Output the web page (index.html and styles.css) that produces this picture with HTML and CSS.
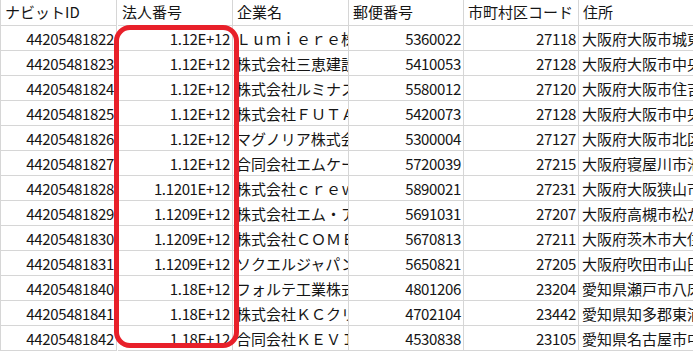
FILE: index.html
```html
<!DOCTYPE html>
<html lang="ja">
<head>
<meta charset="utf-8">
<title>Sheet</title>
<link rel="stylesheet" href="styles.css">
</head>
<body>
<div class="sheet">
  <div class="grid">
    <div class="c hd">ナビットID</div><div class="c hd">法人番号</div><div class="c hd">企業名</div><div class="c hd">郵便番号</div><div class="c hd">市町村区コード</div><div class="c hd">住所</div>

    <div class="c n">44205481822</div><div class="c n">1.12E+12</div><div class="c t">Ｌｕｍｉｅｒｅ株式会社</div><div class="c n">5360022</div><div class="c n">27118</div><div class="c t">大阪府大阪市城東区</div>
    <div class="c n">44205481823</div><div class="c n">1.12E+12</div><div class="c t">株式会社三恵建設</div><div class="c n">5410053</div><div class="c n">27128</div><div class="c t">大阪府大阪市中央区</div>
    <div class="c n">44205481824</div><div class="c n">1.12E+12</div><div class="c t">株式会社ルミナス</div><div class="c n">5580012</div><div class="c n">27120</div><div class="c t">大阪府大阪市住吉区</div>
    <div class="c n">44205481825</div><div class="c n">1.12E+12</div><div class="c t">株式会社ＦＵＴＡＢＡ</div><div class="c n">5420073</div><div class="c n">27128</div><div class="c t">大阪府大阪市中央区</div>
    <div class="c n">44205481826</div><div class="c n">1.12E+12</div><div class="c t">マグノリア株式会社</div><div class="c n">5300004</div><div class="c n">27127</div><div class="c t">大阪府大阪市北区</div>
    <div class="c n">44205481827</div><div class="c n">1.12E+12</div><div class="c t">合同会社エムケー</div><div class="c n">5720039</div><div class="c n">27215</div><div class="c t">大阪府寝屋川市池田</div>
    <div class="c n">44205481828</div><div class="c n">1.1201E+12</div><div class="c t">株式会社ｃｒｅｗ</div><div class="c n">5890021</div><div class="c n">27231</div><div class="c t">大阪府大阪狭山市</div>
    <div class="c n">44205481829</div><div class="c n">1.1209E+12</div><div class="c t">株式会社エム・ア</div><div class="c n">5691031</div><div class="c n">27207</div><div class="c t">大阪府高槻市松が丘</div>
    <div class="c n">44205481830</div><div class="c n">1.1209E+12</div><div class="c t">株式会社ＣＯＭＥ</div><div class="c n">5670813</div><div class="c n">27211</div><div class="c t">大阪府茨木市大住町</div>
    <div class="c n">44205481831</div><div class="c n">1.1209E+12</div><div class="c t">ソクエルジャパン</div><div class="c n">5650821</div><div class="c n">27205</div><div class="c t">大阪府吹田市山田西</div>
    <div class="c n">44205481840</div><div class="c n">1.18E+12</div><div class="c t">フォルテ工業株式会社</div><div class="c n">4801206</div><div class="c n">23204</div><div class="c t">愛知県瀬戸市八床町</div>
    <div class="c n">44205481841</div><div class="c n">1.18E+12</div><div class="c t">株式会社ＫＣクリエイト</div><div class="c n">4702104</div><div class="c n">23442</div><div class="c t">愛知県知多郡東浦町</div>
    <div class="c n">44205481842</div><div class="c n">1.18E+12</div><div class="c t">合同会社ＫＥＶＩＮ</div><div class="c n">4530838</div><div class="c n">23105</div><div class="c t">愛知県名古屋市中村区</div>
  </div>
  <div class="mark"></div>
</div>
</body>
</html>
```

FILE: styles.css
```css
html, body {
  margin: 0;
  padding: 0;
  background: #fff;
}
.sheet {
  position: relative;
  width: 693px;
  height: 351px;
  overflow: hidden;
}
.grid {
  display: grid;
  grid-template-columns: 117px 115px 116px 115px 115px 115px;
  grid-template-rows: 26px repeat(13, 25px);
  border-left: 1px solid #d6d6d6;
  width: 692px;
  font-family: "Noto Sans CJK JP", "Noto Sans", sans-serif;
  font-size: 15px;
  color: #151515;
}
.grid .c:nth-child(6n+1) {
  width: 116px;
}
.c {
  box-sizing: border-box;
  border-right: 1px solid #d6d6d6;
  border-bottom: 1px solid #d6d6d6;
  white-space: nowrap;
  overflow: hidden;
  line-height: 22px;
  padding-top: 2px;
}
.hd {
  padding-left: 4px;
  padding-top: 1px;
}
.n {
  text-align: right;
  padding-right: 2px;
  letter-spacing: -0.35px;
}
.t {
  padding-left: 3px;
}
.mark {
  position: absolute;
  left: 114px;
  top: 25px;
  width: 125px;
  height: 323px;
  box-sizing: border-box;
  border: 5px solid #e8202a;
  border-radius: 16px;
}
```
